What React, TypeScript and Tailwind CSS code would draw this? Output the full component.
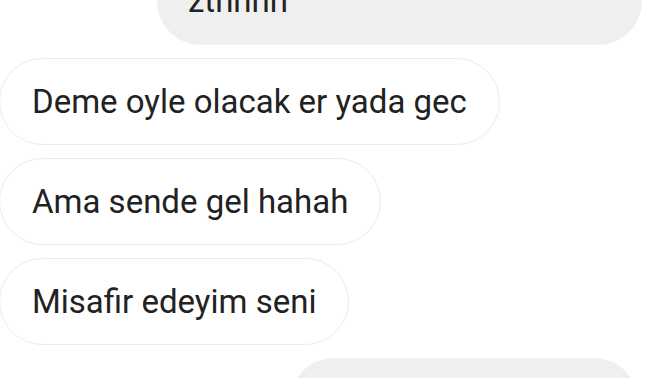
const received = ["Deme oyle olacak er yada gec", "Ama sende gel hahah", "Misafir edeyim seni"];

const App = () => {
  return (
    <div
      className="w-[672px] h-[378px] overflow-hidden bg-white text-[#222222]"
      style={{ fontFamily: "Roboto, 'Noto Sans', sans-serif" }}
    >
      <div className="flex flex-col gap-[13px] mt-[-43px]">
        <div className="ml-auto mr-[30px] w-[485px] h-[88px] flex items-center pl-[31px] rounded-[44px] bg-[#efefef] text-[33px] leading-[40px]">
          zthhhh
        </div>
        {received.map((msg) => (
          <div
            key={msg}
            className="self-start ml-[-1px] h-[87px] flex items-center px-[32px] rounded-[44px] border border-[#ebebeb] bg-white text-[33px] leading-[40px]"
          >
            {msg}
          </div>
        ))}
        <div className="ml-auto mr-[34px] w-[348px] h-[88px] rounded-[44px] bg-[#efefef]" />
      </div>
    </div>
  );
};

export default App;
